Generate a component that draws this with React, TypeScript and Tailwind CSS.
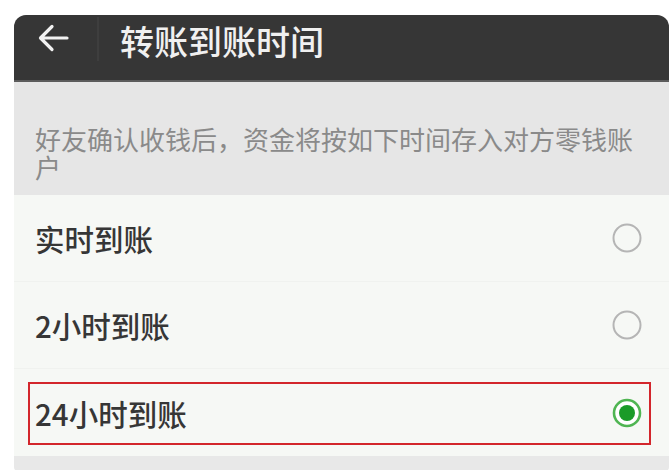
import React from "react";

const font = { fontFamily: '"Noto Sans CJK SC", "Noto Sans", sans-serif' };

const options = [
  { label: "实时到账", checked: false },
  { label: "2小时到账", checked: false },
  { label: "24小时到账", checked: true },
];

function Radio({ checked }: { checked: boolean }) {
  if (checked) {
    return (
      <svg width="30" height="30" viewBox="0 0 30 30">
        <circle cx="15" cy="15" r="13" fill="#ffffff" stroke="#4fb552" strokeWidth="2.6" />
        <circle cx="15" cy="15" r="8" fill="#1a9b28" />
      </svg>
    );
  }
  return (
    <svg width="30" height="30" viewBox="0 0 30 30">
      <circle cx="15" cy="15" r="13.5" fill="none" stroke="#b5b5b5" strokeWidth="2" />
    </svg>
  );
}

export default function App() {
  return (
    <div className="w-[672px] h-[470px] bg-white pt-[15px] pl-[14px] pr-[3px] overflow-hidden" style={font}>
      <div className="flex flex-col h-[462px] rounded-[12px] overflow-hidden bg-[#e8e8e8]">
        {/* header */}
        <div className="flex h-[65px] bg-[#363636] shrink-0">
          <div className="w-[83px] pl-[24px] pt-[9px]">
            <svg width="31" height="28" viewBox="0 0 31 28" fill="none">
              <path d="M29 14H3M14 2.5L2.5 14L14 25.5" stroke="#f2f2f2" strokeWidth="3.2" strokeLinecap="round" strokeLinejoin="round" />
            </svg>
          </div>
          <div className="w-[2px] h-[44px] mt-[2px] bg-[#3e3e3e]" />
          <div className="pl-[21px] pt-[8px] text-[34px] leading-[36px] font-medium text-[#f0f0f0]">转账到账时间</div>
        </div>
        <div className="h-[2px] bg-[#5c5c5c] shrink-0" />

        {/* description */}
        <div className="h-[113px] bg-[#e6e6e6] pl-[21px] pr-[24px] pt-[43px] shrink-0">
          <p className="text-[26px] leading-[28px] text-[#8a8a8a]">好友确认收钱后，资金将按如下时间存入对方零钱账户</p>
        </div>

        {/* options */}
        <div className="bg-[#f6f8f5] shrink-0">
          {options.map((o, i) => (
            <div
              key={o.label}
              className={`relative flex items-center justify-between h-[87px] pl-[21px] pr-[27px] ${i < 2 ? "border-b border-[#f0f2ef]" : ""}`}
            >
              <span className="text-[29.5px] leading-none font-medium text-[#363636] pt-[2px]">{o.label}</span>
              <Radio checked={o.checked} />
              {o.checked && (
                <div className="absolute left-[14px] top-[13px] w-[623px] h-[63px] border-2 border-[#d3262c]" />
              )}
            </div>
          ))}
        </div>
        <div className="flex-1 bg-[#e8e8e8]" />
      </div>
    </div>
  );
}
